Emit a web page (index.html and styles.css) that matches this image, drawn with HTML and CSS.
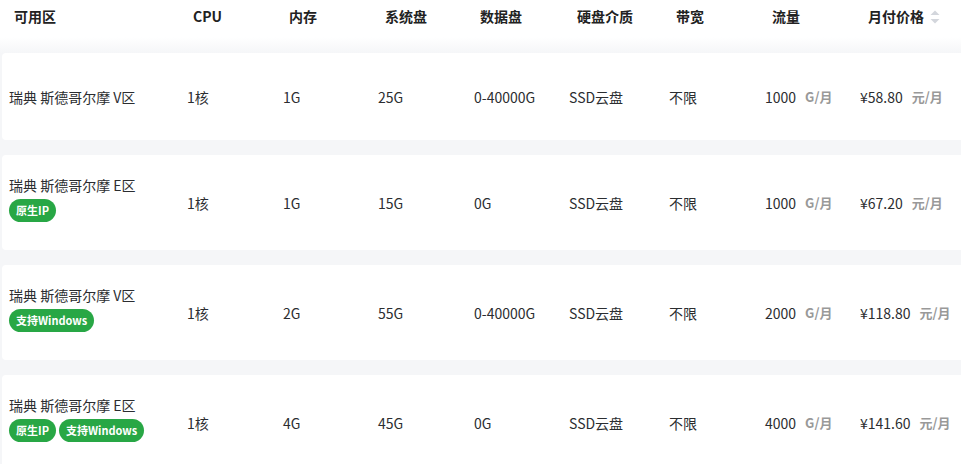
FILE: index.html
```html
<!DOCTYPE html>
<html lang="zh-CN">
<head>
<meta charset="utf-8">
<title>价格表</title>
<link rel="stylesheet" href="styles.css">
</head>
<body>
<div class="table">
  <div class="thead">
    <div class="th">可用区</div>
    <div class="th">CPU</div>
    <div class="th">内存</div>
    <div class="th">系统盘</div>
    <div class="th">数据盘</div>
    <div class="th">硬盘介质</div>
    <div class="th">带宽</div>
    <div class="th">流量</div>
    <div class="th th-sort">月付价格<span class="sort"><svg width="10" height="16" viewBox="0 0 10 16"><polygon points="0.5,6 5,1.5 9.5,6" fill="#d3d6dc"/><polygon points="0.5,10 5,14.5 9.5,10" fill="#d3d6dc"/></svg></span></div>
  </div>
  <div class="tbody">
    <div class="row row-short">
      <div class="cell cell-name"><div class="name">瑞典 斯德哥尔摩 V区</div></div>
      <div class="cell">1核</div>
      <div class="cell">1G</div>
      <div class="cell">25G</div>
      <div class="cell">0-40000G</div>
      <div class="cell">SSD云盘</div>
      <div class="cell">不限</div>
      <div class="cell">1000<span class="unit">G/月</span></div>
      <div class="cell">¥58.80<span class="unit">元/月</span></div>
    </div>
    <div class="row">
      <div class="cell cell-name"><div class="name">瑞典 斯德哥尔摩 E区</div><div class="tags"><span class="tag">原生IP</span></div></div>
      <div class="cell">1核</div>
      <div class="cell">1G</div>
      <div class="cell">15G</div>
      <div class="cell">0G</div>
      <div class="cell">SSD云盘</div>
      <div class="cell">不限</div>
      <div class="cell">1000<span class="unit">G/月</span></div>
      <div class="cell">¥67.20<span class="unit">元/月</span></div>
    </div>
    <div class="row">
      <div class="cell cell-name"><div class="name">瑞典 斯德哥尔摩 V区</div><div class="tags"><span class="tag">支持Windows</span></div></div>
      <div class="cell">1核</div>
      <div class="cell">2G</div>
      <div class="cell">55G</div>
      <div class="cell">0-40000G</div>
      <div class="cell">SSD云盘</div>
      <div class="cell">不限</div>
      <div class="cell">2000<span class="unit">G/月</span></div>
      <div class="cell">¥118.80<span class="unit">元/月</span></div>
    </div>
    <div class="row">
      <div class="cell cell-name"><div class="name">瑞典 斯德哥尔摩 E区</div><div class="tags"><span class="tag">原生IP</span><span class="tag">支持Windows</span></div></div>
      <div class="cell">1核</div>
      <div class="cell">4G</div>
      <div class="cell">45G</div>
      <div class="cell">0G</div>
      <div class="cell">SSD云盘</div>
      <div class="cell">不限</div>
      <div class="cell">4000<span class="unit">G/月</span></div>
      <div class="cell">¥141.60<span class="unit">元/月</span></div>
    </div>
  </div>
</div>
</body>
</html>
```

FILE: styles.css
```css
html, body {
  margin: 0;
  padding: 0;
}
body {
  background: #f5f6f8;
  font-family: "Noto Sans CJK SC", "Noto Sans", sans-serif;
  font-size: 14px;
  color: #2b2d30;
  overflow: hidden;
  width: 961px;
  height: 464px;
}
.table {
  width: 1000px;
}
.thead {
  display: grid;
  grid-template-columns: 179px 96px 96px 95px 97px 99px 96px 96px 1fr;
  padding-left: 14px;
  height: 53px;
  background: linear-gradient(to bottom, #ffffff 0, #ffffff 37px, #f5f6f8 53px);
}
.th {
  font-weight: 700;
  color: #222222;
  line-height: 32px;
  white-space: nowrap;
  display: flex;
  align-items: center;
  height: 32px;
}
.sort {
  display: inline-flex;
  margin-left: 6px;
  margin-top: 1px;
}
.tbody {
  display: flex;
  flex-direction: column;
  gap: 15px;
}
.row {
  display: grid;
  grid-template-columns: 178px 96px 95px 96px 95px 100px 96px 95px 1fr;
  align-items: center;
  margin-left: 2px;
  padding-left: 7px;
  background: #ffffff;
  border-radius: 4px;
  min-height: 95px;
}
.row-short {
  min-height: 87px;
}
.cell {
  white-space: nowrap;
  line-height: 22px;
  display: flex;
  align-items: center;
}
.cell-name {
  flex-direction: column;
  align-items: flex-start;
}
.name {
  line-height: 22px;
}
.tags {
  display: flex;
  gap: 3px;
  margin-top: 3px;
  margin-bottom: 10px;
}
.tag {
  display: inline-block;
  height: 23px;
  line-height: 23px;
  padding: 0 7px;
  border-radius: 12px;
  background: #28a745;
  color: #ffffff;
  font-size: 11px;
  font-weight: 700;
}
.unit {
  margin-left: 9px;
  font-size: 13px;
  font-weight: 700;
  color: #999999;
}
```
